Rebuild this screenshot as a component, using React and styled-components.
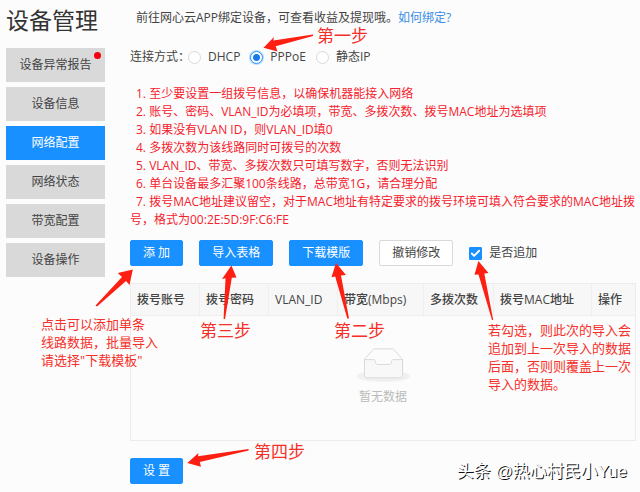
import React, { useState } from "react";
import styled, { createGlobalStyle } from "styled-components";
import { Check } from "lucide-react";

const menuItems = [
  { label: "设备异常报告", hasAlert: true },
  { label: "设备信息" },
  { label: "网络配置" },
  { label: "网络状态" },
  { label: "带宽配置" },
  { label: "设备操作" },
];

const connectionTypes = ["DHCP", "PPPoE", "静态IP"];

const notes = [
  "1. 至少要设置一组拨号信息，以确保机器能接入网络",
  "2. 账号、密码、VLAN_ID为必填项，带宽、多拨次数、拨号MAC地址为选填项",
  "3. 如果没有VLAN ID，则VLAN_ID填0",
  "4. 多拨次数为该线路同时可拨号的次数",
  "5. VLAN_ID、带宽、多拨次数只可填写数字，否则无法识别",
  "6. 单台设备最多汇聚100条线路，总带宽1G，请合理分配",
  "7. 拨号MAC地址建议留空，对于MAC地址有特定要求的拨号环境可填入符合要求的MAC地址拨号，格式为00:2E:5D:9F:C6:FE",
];

const columns = [
  { label: "拨号账号", width: 69 },
  { label: "拨号密码", width: 69 },
  { label: "VLAN_ID", width: 69 },
  { label: "带宽(Mbps)", width: 86 },
  { label: "多拨次数", width: 70 },
  { label: "拨号MAC地址", width: 98 },
  { label: "操作", width: 43 },
];

const steps = [
  { label: "第一步", x: 317, y: 27 },
  { label: "第二步", x: 334, y: 322 },
  { label: "第三步", x: 200, y: 322 },
  { label: "第四步", x: 254, y: 443 },
];

const EmptyIcon = () => (
  <EmptySvg viewBox="0 0 64 41" width="53" height="34" aria-hidden="true">
    <g transform="translate(0 1)" fill="none" fillRule="evenodd">
      <ellipse fill="#f0f0f0" cx="32" cy="33" rx="32" ry="7" />
      <g stroke="#d4d4d4">
        <path d="M55 12.76L44.854 1.258C44.367.474 43.656 0 42.907 0H21.093c-.749 0-1.46.474-1.947 1.257L9 12.761V22h46v-9.24z" />
        <path
          d="M41.613 15.931c0-1.605.994-2.93 2.227-2.931H55v18.137C55 33.26 53.68 35 52.05 35h-40.1C10.32 35 9 33.259 9 31.137V13h11.16c1.233 0 2.227 1.323 2.227 2.928v.022c0 1.605 1.005 2.901 2.237 2.901h14.752c1.232 0 2.237-1.308 2.237-2.913v-.007z"
          fill="#f8f8f8"
        />
      </g>
    </g>
  </EmptySvg>
);

const Arrows = () => (
  <ArrowSvg width="640" height="492" fill="#fc1f12" aria-hidden="true">
    <path d="M263.5 47.7L274 37L273.3 40.5L313 34.6L313 36L275.7 46.2L277.5 51.5Z" />
    <path d="M132.8 269.5L117.8 273L122 277L95.5 305.5L97 306.5L126 281L129.5 285Z" />
    <path d="M231.4 265.5L222 279L225.5 278.3L223.6 319L225 319L231.8 277.8L236.5 277.5Z" />
    <path d="M336 263L331.5 277.3L335.2 276.6L347.3 318.5L349 318.5L341 275.5L346 275Z" />
    <path d="M478.4 261L474.5 274.8L478.5 274.6L492 320L493.2 320L484.3 273.6L488.5 273Z" />
    <path d="M187.3 463L198.5 453L198 456.3L248.6 449L248.6 450.4L199.8 462L201 466.8Z" />
  </ArrowSvg>
);

const App = () => {
  const [activeItem, setActiveItem] = useState("网络配置");
  const [connection, setConnection] = useState("PPPoE");
  const [isAppend, setIsAppend] = useState(true);

  return (
    <>
      <GlobalStyle />
      <Page>
        <Sidebar>
          <Title>设备管理</Title>
          <Menu>
            {menuItems.map(({ label, hasAlert }) => (
              <MenuButton
                key={label}
                type="button"
                $active={label === activeItem}
                onClick={() => setActiveItem(label)}
              >
                {label}
                {hasAlert && <AlertDot />}
              </MenuButton>
            ))}
          </Menu>
        </Sidebar>

        <Main>
          <Tip>
            前往网心云APP绑定设备，可查看收益及提现哦。
            <a href="#bind">如何绑定?</a>
          </Tip>

          <RadioRow role="radiogroup" aria-labelledby="connection-label">
            <RadioTitle id="connection-label">连接方式：</RadioTitle>
            {connectionTypes.map((type) => (
              <RadioLabel key={type}>
                <Radio
                  type="radio"
                  name="connection"
                  checked={connection === type}
                  onChange={() => setConnection(type)}
                />
                {type}
              </RadioLabel>
            ))}
          </RadioRow>

          <Notes>
            {notes.map((note) => (
              <Note key={note}>{note}</Note>
            ))}
          </Notes>

          <Toolbar>
            <Button type="button">添 加</Button>
            <Button type="button">导入表格</Button>
            <Button type="button">下载模版</Button>
            <Button type="button" $plain>
              撤销修改
            </Button>
            <CheckLabel>
              <CheckWrap>
                <Checkbox
                  type="checkbox"
                  checked={isAppend}
                  onChange={(event) => setIsAppend(event.target.checked)}
                />
                {isAppend && <Check size={11} color="#fff" strokeWidth={4} />}
              </CheckWrap>
              是否追加
            </CheckLabel>
          </Toolbar>

          <Table>
            <colgroup>
              {columns.map(({ label, width }) => (
                <col key={label} width={width} />
              ))}
            </colgroup>
            <thead>
              <tr>
                {columns.map(({ label }) => (
                  <HeadCell key={label}>{label}</HeadCell>
                ))}
              </tr>
            </thead>
            <tbody>
              <tr>
                <EmptyCell colSpan={columns.length}>
                  <EmptyIcon />
                  暂无数据
                </EmptyCell>
              </tr>
            </tbody>
          </Table>

          <Button type="submit">设 置</Button>
        </Main>

        <Arrows />
        {steps.map(({ label, x, y }) => (
          <Step key={label} $x={x} $y={y}>
            {label}
          </Step>
        ))}
        <Remark $x={41} $y={315}>
          点击可以添加单条
          <br />
          线路数据，批量导入
          <br />
          请选择"下载模板"
        </Remark>
        <Remark $x={488} $y={321}>
          若勾选，则此次的导入会
          <br />
          追加到上一次导入的数据
          <br />
          后面，否则则覆盖上一次
          <br />
          导入的数据。
        </Remark>
        <Watermark>头条 @热心村民小Yue</Watermark>
      </Page>
    </>
  );
};

export default App;

const GlobalStyle = createGlobalStyle`
  * {
    box-sizing: border-box;
  }

  body {
    margin: 0;
    background: #fcfcfc;
    color: #444;
    font-family: "Open Sans", "Noto Sans CJK SC", sans-serif;
    font-size: 12px;
    line-height: 16px;
  }

  button,
  input {
    margin: 0;
    font: inherit;
  }
`;

const Page = styled.div`
  position: relative;
  display: flex;
  gap: 25px;
  min-height: 100vh;
  padding: 6px 6px 8px;
  overflow: hidden;
`;

const Sidebar = styled.aside`
  flex: 0 0 99px;
`;

const Title = styled.h1`
  margin: 0 0 14px;
  color: #333;
  font-size: 23px;
  font-weight: 400;
  line-height: 28px;
  white-space: nowrap;
`;

const Menu = styled.nav`
  display: flex;
  flex-direction: column;
  gap: 5px;
`;

const MenuButton = styled.button`
  position: relative;
  height: 34px;
  padding: 0;
  border: none;
  background: ${({ $active }) => ($active ? "#1890ff" : "#d9d9d9")};
  color: ${({ $active }) => ($active ? "#fff" : "#444")};
  cursor: pointer;
`;

const AlertDot = styled.span`
  position: absolute;
  top: 4px;
  right: 4px;
  width: 7px;
  height: 7px;
  border-radius: 50%;
  background: #f5000f;
`;

const Main = styled.main`
  flex: 1;
  min-width: 0;
  padding-top: 4px;
`;

const Tip = styled.p`
  margin: 0 0 23px;
  padding-left: 6px;

  a {
    color: #3a8ee6;
    text-decoration: none;
  }
`;

const RadioRow = styled.div`
  display: flex;
  align-items: center;
  gap: 10px;
  height: 16px;
  margin-bottom: 20px;
`;

const RadioTitle = styled.span`
  margin-right: -12px;
`;

const RadioLabel = styled.label`
  display: flex;
  align-items: center;
  gap: 7px;
  cursor: pointer;
`;

const Radio = styled.input`
  appearance: none;
  width: 13px;
  height: 13px;
  border: 1px solid #d9d9d9;
  border-radius: 50%;
  background: #fff;

  &:checked {
    border-color: #1890ff;
    background: radial-gradient(circle, #1879e8 3px, #fff 4px);
    box-shadow: 0 0 0 1px #b5dbff;
  }
`;

const Notes = styled.div`
  margin: 0 -6px 11px 0;
  color: #f5222d;
`;

const Note = styled.p`
  margin: 0;
  line-height: 18px;
  text-indent: 6px;
`;

const Toolbar = styled.div`
  display: flex;
  align-items: center;
  gap: 16px;
  margin-bottom: 17px;
`;

const Button = styled.button`
  height: 26px;
  padding: 0 12px;
  border: 1px solid ${({ $plain }) => ($plain ? "#d9d9d9" : "#1890ff")};
  border-radius: 2px;
  background: ${({ $plain }) => ($plain ? "#fff" : "#1890ff")};
  color: ${({ $plain }) => ($plain ? "#444" : "#fff")};
  white-space: nowrap;
  cursor: pointer;
`;

const CheckLabel = styled.label`
  display: flex;
  align-items: center;
  gap: 7px;
  cursor: pointer;
`;

const CheckWrap = styled.span`
  display: grid;
  place-items: center;

  > * {
    grid-area: 1 / 1;
  }

  svg {
    pointer-events: none;
  }
`;

const Checkbox = styled.input`
  appearance: none;
  width: 13px;
  height: 13px;
  border: 1px solid #d9d9d9;
  border-radius: 1px;
  background: #fff;

  &:checked {
    border-color: #1890ff;
    background: #1890ff;
  }
`;

const Table = styled.table`
  width: 100%;
  margin-bottom: 17px;
  border: 1px solid #ececec;
  border-collapse: separate;
  border-spacing: 0;
  table-layout: fixed;
`;

const HeadCell = styled.th`
  height: 32px;
  padding: 0 6px;
  border-right: 1px solid #efefef;
  border-bottom: 1px solid #efefef;
  background: #f7f7f7;
  font-weight: 500;
  text-align: left;
  white-space: nowrap;

  &:last-child {
    border-right: none;
  }
`;

const EmptyCell = styled.td`
  height: 124px;
  padding: 32px 0 0;
  color: #bbb;
  text-align: center;
  vertical-align: top;
`;

const EmptySvg = styled.svg`
  display: block;
  margin: 0 auto 7px;
`;

const ArrowSvg = styled.svg`
  position: absolute;
  top: 0;
  left: 0;
  pointer-events: none;
`;

/* red marks that sit over the form */
const Annotation = styled.p`
  position: absolute;
  top: ${({ $y }) => $y}px;
  left: ${({ $x }) => $x}px;
  margin: 0;
  color: #f5302a;
  white-space: nowrap;
  pointer-events: none;
`;

const Step = styled(Annotation)`
  font-size: 17px;
  line-height: 18px;
`;

const Remark = styled(Annotation)`
  font-size: 13px;
  line-height: 18px;
`;

const Watermark = styled.span`
  position: absolute;
  right: 13px;
  bottom: 9px;
  color: #fff;
  font-family: "Liberation Sans", "Noto Sans CJK SC", sans-serif;
  font-size: 17px;
  line-height: 22px;
  text-shadow: 1px 1px 0 #111;
`;
